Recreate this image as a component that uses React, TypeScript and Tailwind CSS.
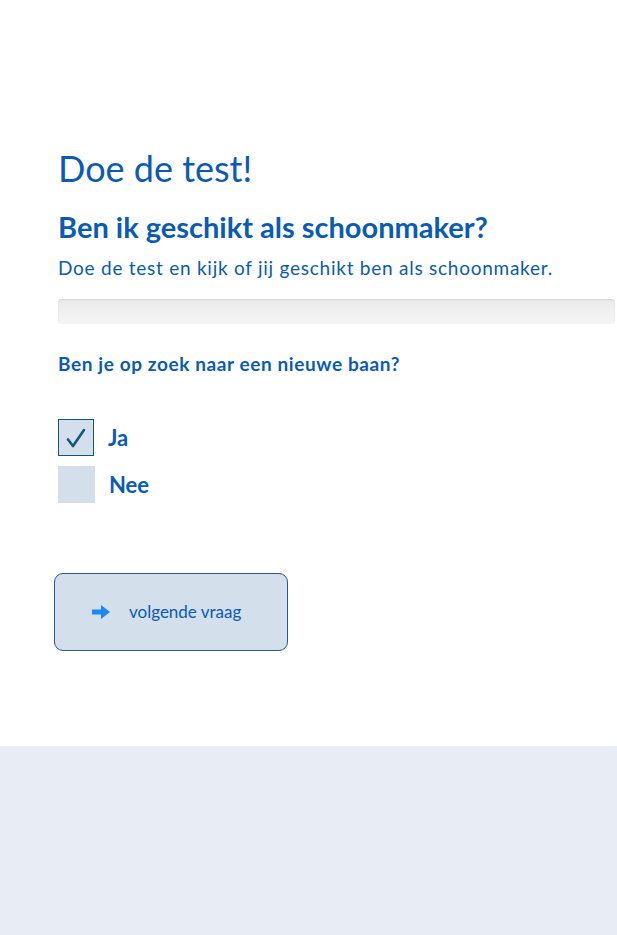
import { useState } from "react";

export default function App() {
  const [answer, setAnswer] = useState<"ja" | "nee" | null>("ja");

  return (
    <div className="flex min-h-screen flex-col bg-white font-['Lato',sans-serif] text-[#0a5bb5]">
      {/* Test */}
      <main className="h-[746px] pl-[58px] pt-[146px]">
        <h1 className="text-[36px] font-normal leading-[44px]">Doe de test!</h1>
        <h2 className="mt-[20px] text-[29px] font-bold leading-[34px]">
          Ben ik geschikt als schoonmaker?
        </h2>
        <p className="mt-[12px] text-[19px] leading-[24px] tracking-[0.75px]">
          Doe de test en kijk of jij geschikt ben als schoonmaker.
        </p>
        <div className="mt-[19px] mr-[2px] h-[25px] rounded-[4px] bg-gradient-to-b from-[#ebebeb] to-[#f5f5f5] shadow-[inset_0_1px_2px_rgba(0,0,0,0.1)]" />

        <h3 className="mt-[28px] text-[19px] font-bold leading-[24px] tracking-[0.6px]">
          Ben je op zoek naar een nieuwe baan?
        </h3>

        <div className="mt-[43px] flex flex-col gap-[10px]">
          <label
            className="flex cursor-pointer items-center gap-[14px]"
            onClick={() => setAnswer("ja")}
          >
            <span
              className={`flex h-[37px] w-[36px] items-center justify-center bg-[#d3dfea] ${
                answer === "ja" ? "border border-[#14577d]" : ""
              }`}
            >
              {answer === "ja" && (
                <svg width="22" height="22" viewBox="0 0 22 22" fill="none">
                  <path
                    d="M3 12.5l5 6.5L19 3"
                    stroke="#14577d"
                    strokeWidth="2.6"
                    strokeLinecap="round"
                    strokeLinejoin="round"
                  />
                </svg>
              )}
            </span>
            <span className="text-[22px] font-bold">Ja</span>
          </label>
          <label
            className="flex cursor-pointer items-center gap-[14px]"
            onClick={() => setAnswer("nee")}
          >
            <span
              className={`flex h-[37px] w-[37px] items-center justify-center bg-[#d3dfea] ${
                answer === "nee" ? "border border-[#14577d]" : ""
              }`}
            />
            <span className="text-[22px] font-bold">Nee</span>
          </label>
        </div>

        <button className="mt-[70px] -ml-[4px] flex h-[78px] w-[234px] items-center rounded-[9px] border border-[#2b5a8c] bg-[#d3dfea] pl-[37px] text-[17px]">
          <svg width="18" height="14" viewBox="0 0 18 14" fill="#1e88f0">
            <path d="M0 4.5h9V0l9 7-9 7V9.5H0z" />
          </svg>
          <span className="ml-[19px]">volgende vraag</span>
        </button>
      </main>

      <footer className="flex-1 bg-[#e8edf5]" />
    </div>
  );
}
